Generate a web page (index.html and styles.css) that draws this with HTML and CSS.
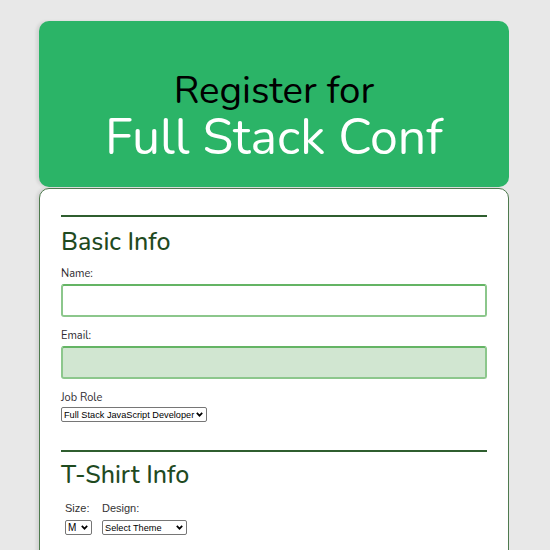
FILE: index.html
```html
<!DOCTYPE html>
<html>
<head>
<meta charset="utf-8">
<link rel="stylesheet" href="styles.css">
</head>
<body>
<div class="page">
  <header class="hero">
    <div class="hero-top">Register for</div>
    <div class="hero-main">Full Stack Conf</div>
  </header>
  <form class="card">
    <section class="section">
      <hr class="rule">
      <h2 class="section-title">Basic Info</h2>
      <label class="label label-first" for="name">Name:</label>
      <input class="field" id="name" type="text">
      <label class="label" for="email">Email:</label>
      <input class="field field-filled" id="email" type="email">
      <label class="label" for="role">Job Role</label>
      <select class="select select-role" id="role">
        <option>Full Stack JavaScript Developer</option>
      </select>
    </section>
    <section class="section">
      <hr class="rule">
      <h2 class="section-title section-title-tight">T-Shirt Info</h2>
      <div class="shirt-row">
        <div class="shirt-col">
          <label class="label-sys" for="size">Size:</label>
          <select class="select select-shirt select-size" id="size"><option>M</option></select>
        </div>
        <div class="shirt-col">
          <label class="label-sys" for="design">Design:</label>
          <select class="select select-shirt select-design" id="design"><option>Select Theme</option></select>
        </div>
      </div>
    </section>
  </form>
</div>
</body>
</html>
```
FILE: styles.css
```css
* { box-sizing: border-box; }
html, body { margin: 0; padding: 0; }
body {
  background: #e8e8e8;
  font-family: "Nunito", "Lato", "Open Sans", sans-serif;
  overflow: hidden;
}
.page {
  width: 470px;
  margin: 21px 0 0 39px;
}
.hero {
  height: 166px;
  background: #2bb467;
  border-radius: 10px;
  box-shadow: -3px 0 3px rgba(0,0,0,0.08);
  text-align: center;
  padding-top: 48px;
}
.hero-top {
  color: #000;
  font-size: 38.5px;
  line-height: 44px;
}
.hero-main {
  color: #fff;
  font-size: 50px;
  line-height: 50px;
}
.card {
  margin-top: 1px;
  background: #fff;
  border: 1px solid #4e7a4e;
  border-radius: 10px 10px 0 0;
  box-shadow: -3px 0 3px rgba(0,0,0,0.08);
  padding: 26px 21px 40px 21px;
  height: 400px;
}
.section { display: flex; flex-direction: column; align-items: flex-start; }
.section + .section { margin-top: 28px; }
.rule {
  width: 100%;
  margin: 0;
  border: none;
  border-top: 2px solid #2f5e2f;
}
.section-title {
  margin: 10px 0 0 0;
  font-weight: 500;
  font-size: 25px;
  line-height: 30px;
  color: #1f4a1f;
}
.section-title-tight { margin-top: 8px; }
.label {
  margin-top: 12px;
  font-size: 11px;
  line-height: 14px;
  color: #2e2a30;
}
.label-first { margin-top: 10px; }
.field {
  margin-top: 3px;
  width: 100%;
  height: 33px;
  border: 2px solid #8cc78c;
  border-top-color: #64b464;
  border-radius: 3px;
  background: #fff;
  outline: none;
}
.field-filled { background: #d1e6d1; }
.select {
  -webkit-appearance: none;
  appearance: none;
  margin-top: 2px;
  font-family: "Liberation Sans", Arial, sans-serif;
  font-size: 9.2px;
  line-height: 12px;
  height: 15px;
  padding: 0 9px 0 2px;
  border: 1px solid #767676;
  border-radius: 2px;
  background-color: #fff;
  background-image: url("data:image/svg+xml;utf8,<svg xmlns='http://www.w3.org/2000/svg' width='7' height='5' viewBox='0 0 7 5'><path d='M0.8 0.9 L3.5 3.7 L6.2 0.9' fill='none' stroke='black' stroke-width='1.7'/></svg>");
  background-repeat: no-repeat;
  background-position: right 3px center;
  background-size: 7px 5px;
  color: #000;
}
.select-role { width: 146px; }
.shirt-row {
  display: flex;
  gap: 10px;
  margin-top: 12px;
  padding-left: 4px;
}
.shirt-col { display: flex; flex-direction: column; align-items: flex-start; }
.label-sys {
  font-family: "Liberation Sans", Arial, sans-serif;
  font-size: 11px;
  line-height: 13px;
  color: #333;
}
.select-shirt { margin-top: 5px; }
.select-size { width: 27px; font-size: 10px; }
.select-design { width: 85px; }
```
